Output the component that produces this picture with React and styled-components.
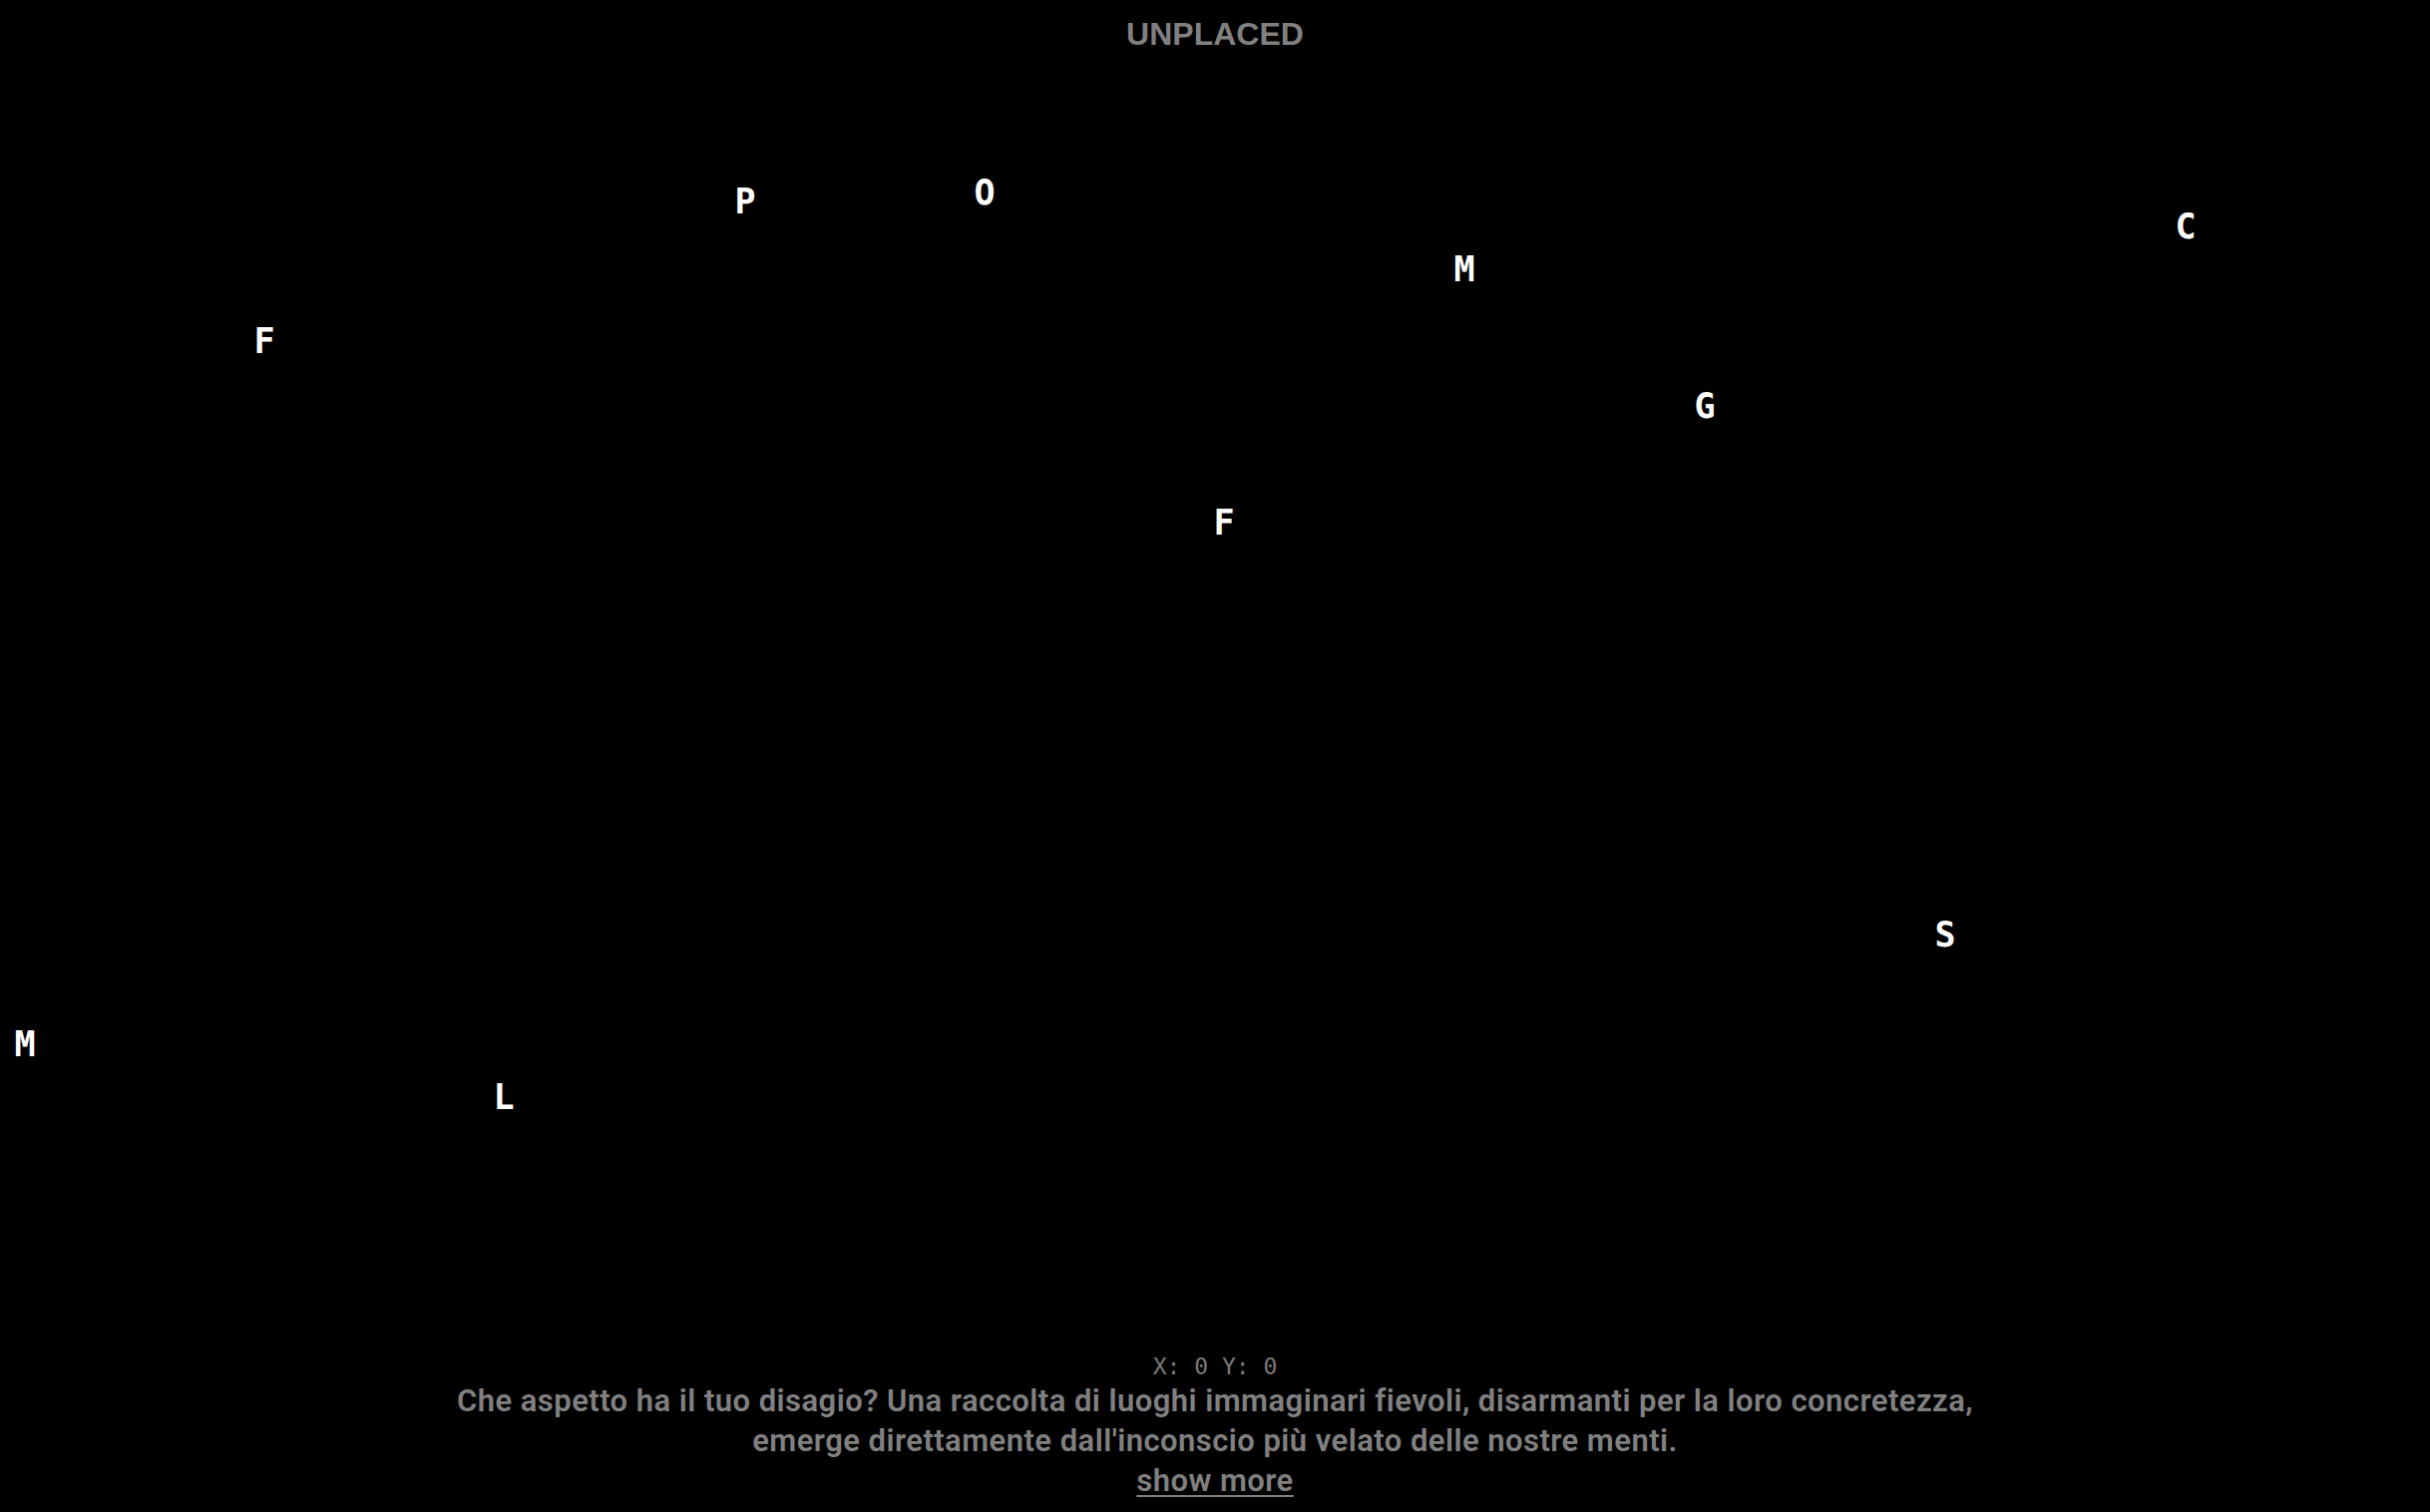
import React from "react";
import styled, { createGlobalStyle } from "styled-components";

const GlobalStyle = createGlobalStyle`
	html, body {
		margin: 0;
		padding: 0;
		background: #000;
		overflow: hidden;
	}
`;

const gray = "#808080";

const Page = styled.main`
	position: relative;
	width: 100vw;
	height: 100vh;
	display: flex;
	flex-direction: column;
	align-items: center;
	background: #000;
	overflow: hidden;
`;

const Title = styled.h1`
	position: relative;
	z-index: 1;
	margin: 0;
	padding-top: 14px;
	font-family: "Liberation Sans", Arial, sans-serif;
	font-weight: 700;
	font-size: 32px;
	line-height: 40px;
	color: ${gray};
`;

// free canvas: each place sits at its own coordinates
const Canvas = styled.section`
	position: absolute;
	inset: 0;
`;

const Place = styled.span`
	position: absolute;
	transform: translate(-50%, -50%);
	font-family: "DejaVu Sans Mono", "Liberation Mono", monospace;
	font-weight: 700;
	font-size: 35px;
	line-height: 1;
	color: #fff;
	cursor: pointer;
	user-select: none;
`;

const Footer = styled.footer`
	position: relative;
	z-index: 1;
	margin-top: auto;
	padding-bottom: 11px;
	display: flex;
	flex-direction: column;
	align-items: center;
	text-align: center;
`;

const Coords = styled.div`
	font-family: "DejaVu Sans Mono", "Liberation Mono", monospace;
	font-size: 23px;
	line-height: 30px;
	color: #7a7a7a;
	white-space: pre;
`;

const Description = styled.p`
	margin: 0;
	font-family: Roboto, "Liberation Sans", sans-serif;
	font-weight: 600;
	font-size: 31px;
	letter-spacing: 0.45px;
	line-height: 40px;
	color: ${gray};
`;

const ShowMore = styled.button`
	background: none;
	border: none;
	padding: 0;
	font-family: Roboto, "Liberation Sans", sans-serif;
	font-weight: 600;
	font-size: 31px;
	letter-spacing: 0.45px;
	line-height: 40px;
	color: ${gray};
	text-decoration: underline;
	text-underline-offset: 4px;
	text-decoration-thickness: 2px;
	cursor: pointer;
`;

const places = [
	{ l: "P", x: 747, y: 202 },
	{ l: "O", x: 987, y: 193 },
	{ l: "M", x: 1468, y: 270 },
	{ l: "C", x: 2191, y: 227 },
	{ l: "F", x: 265, y: 342 },
	{ l: "G", x: 1709, y: 407 },
	{ l: "F", x: 1227, y: 524 },
	{ l: "S", x: 1950, y: 937 },
	{ l: "M", x: 25, y: 1047 },
	{ l: "L", x: 505, y: 1100 },
	{ l: "B", x: 2446, y: 1037 },
];

export default function App() {
	return (
		<>
			<GlobalStyle />
			<Page>
				<Canvas>
					{places.map((p, i) => (
						<Place key={i} style={{ left: p.x, top: p.y }}>
							{p.l}
						</Place>
					))}
				</Canvas>
				<Title>UNPLACED</Title>
				<Footer>
					<Coords>X: 0 Y: 0</Coords>
					<Description>
						Che aspetto ha il tuo disagio? Una raccolta di luoghi immaginari fievoli, disarmanti per la loro concretezza,
						<br />
						emerge direttamente dall'inconscio più velato delle nostre menti.
					</Description>
					<ShowMore>show more</ShowMore>
				</Footer>
			</Page>
		</>
	);
}
